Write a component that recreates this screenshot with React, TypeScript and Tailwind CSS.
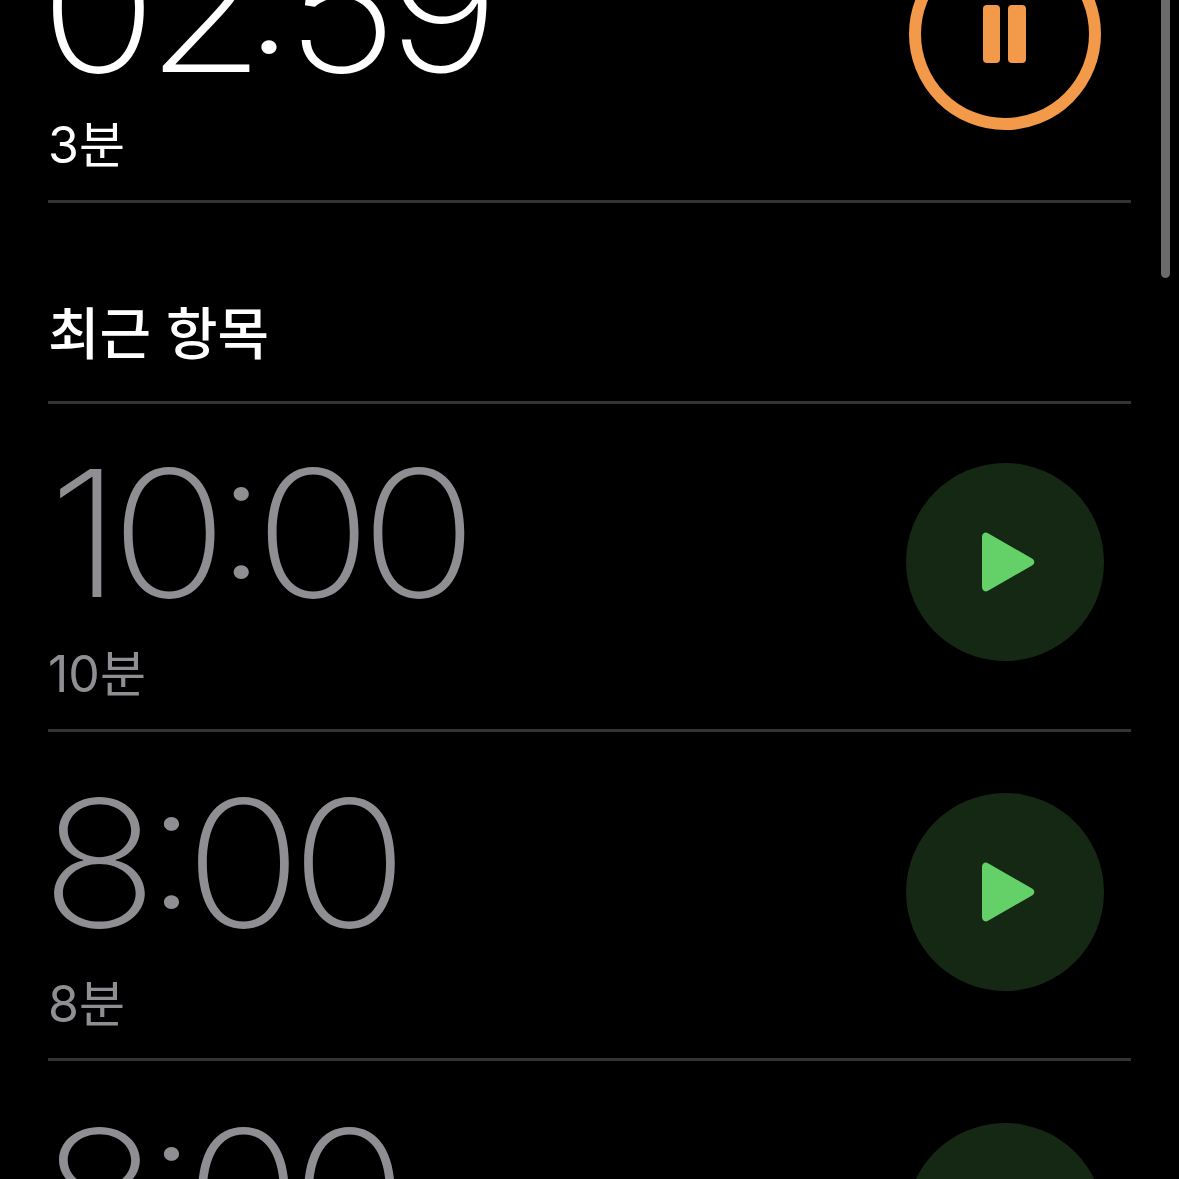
const recents = [
  { time: ['10', '00'], label: '10분', top: 'pt-[59px]', height: 'h-[328px]', shift: 'ml-0' },
  { time: ['8', '00'], label: '8분', top: 'pt-[61px]', height: 'h-[329px]', shift: 'ml-[-7px]' },
  { time: ['8', '00'], label: '8분', top: 'pt-[62px]', height: 'h-[329px]', shift: 'ml-[-7px]' },
];

// digits in the reference are wider and the colon tighter than Inter's own
function Clock({
  time,
  shift,
  colon = 'mx-[-2px]',
}: {
  time: string[];
  shift: string;
  colon?: string;
}) {
  return (
    <span
      className={`h-[180px] origin-left scale-x-[1.1] whitespace-nowrap text-[176px] font-extralight leading-[140px] tracking-[-10px] ${shift}`}>
      {time[0]}
      <span className={`[font-feature-settings:'case'] ${colon}`}>:</span>
      {time[1]}
    </span>
  );
}

function TimerRow({
  time,
  label,
  top,
  height,
  shift,
}: {
  time: string[];
  label: string;
  top: string;
  height: string;
  shift: string;
}) {
  return (
    <li
      className={`flex shrink-0 items-start justify-between border-b-[3px] border-[#333335] pr-[27px] ${top} ${height}`}>
      <div className="flex flex-col text-[#8e8e93]">
        <Clock time={time} shift={shift} />
        <span className="mt-[3px] text-[50px] font-normal leading-[56px]">{label}</span>
      </div>
      <button className="flex h-[198px] w-[198px] items-center justify-center rounded-full bg-[#142814]">
        <svg viewBox="0 0 54 60" className="ml-[5px] h-[60px] w-[54px]">
          <path
            d="M1 5 C1 1.500 4 -0.500 7 1.200 L51 26.500 C54 28.300 54 31.700 51 33.500 L7 58.800 C4 60.500 1 58.500 1 55 Z"
            fill="#63d168"
          />
        </svg>
      </button>
    </li>
  );
}

export default function App() {
  return (
    <div className="relative h-[1179px] w-[1179px] overflow-hidden bg-black font-['Inter','Noto_Sans_CJK_KR',sans-serif]">
      <div className="absolute right-[9px] top-0 h-[278px] w-[9px] rounded-b-full bg-[#6b6b6b]" />
      <ul className="mx-[48px] mt-[-124px] flex flex-col">
        <li className="flex h-[327px] items-start justify-between border-b-[3px] border-[#333335] pr-[30px] pt-[62px]">
          <div className="flex flex-col text-white">
            <Clock time={['02', '59']} shift="ml-[-8px]" colon="ml-[-11px] mr-[1px]" />
            <span className="mt-[-1px] text-[50px] font-normal leading-[56px]">3분</span>
          </div>
          <button className="flex h-[192px] w-[192px] items-center justify-center gap-[8px] rounded-full border-[12px] border-[#f2994a] pr-[2px]">
            <span className="h-[58px] w-[17px] rounded-[4px] bg-[#f2994a]" />
            <span className="h-[58px] w-[18px] rounded-[4px] bg-[#f2994a]" />
          </button>
        </li>
        <li className="flex h-[201px] items-end border-b-[3px] border-[#333335] pb-[34px]">
          <h2 className="text-[56px] font-medium leading-[66px] text-white">최근 항목</h2>
        </li>
        {recents.map((item, i) => (
          <TimerRow
            key={i}
            time={item.time}
            label={item.label}
            top={item.top}
            height={item.height}
            shift={item.shift}
          />
        ))}
      </ul>
    </div>
  );
}
